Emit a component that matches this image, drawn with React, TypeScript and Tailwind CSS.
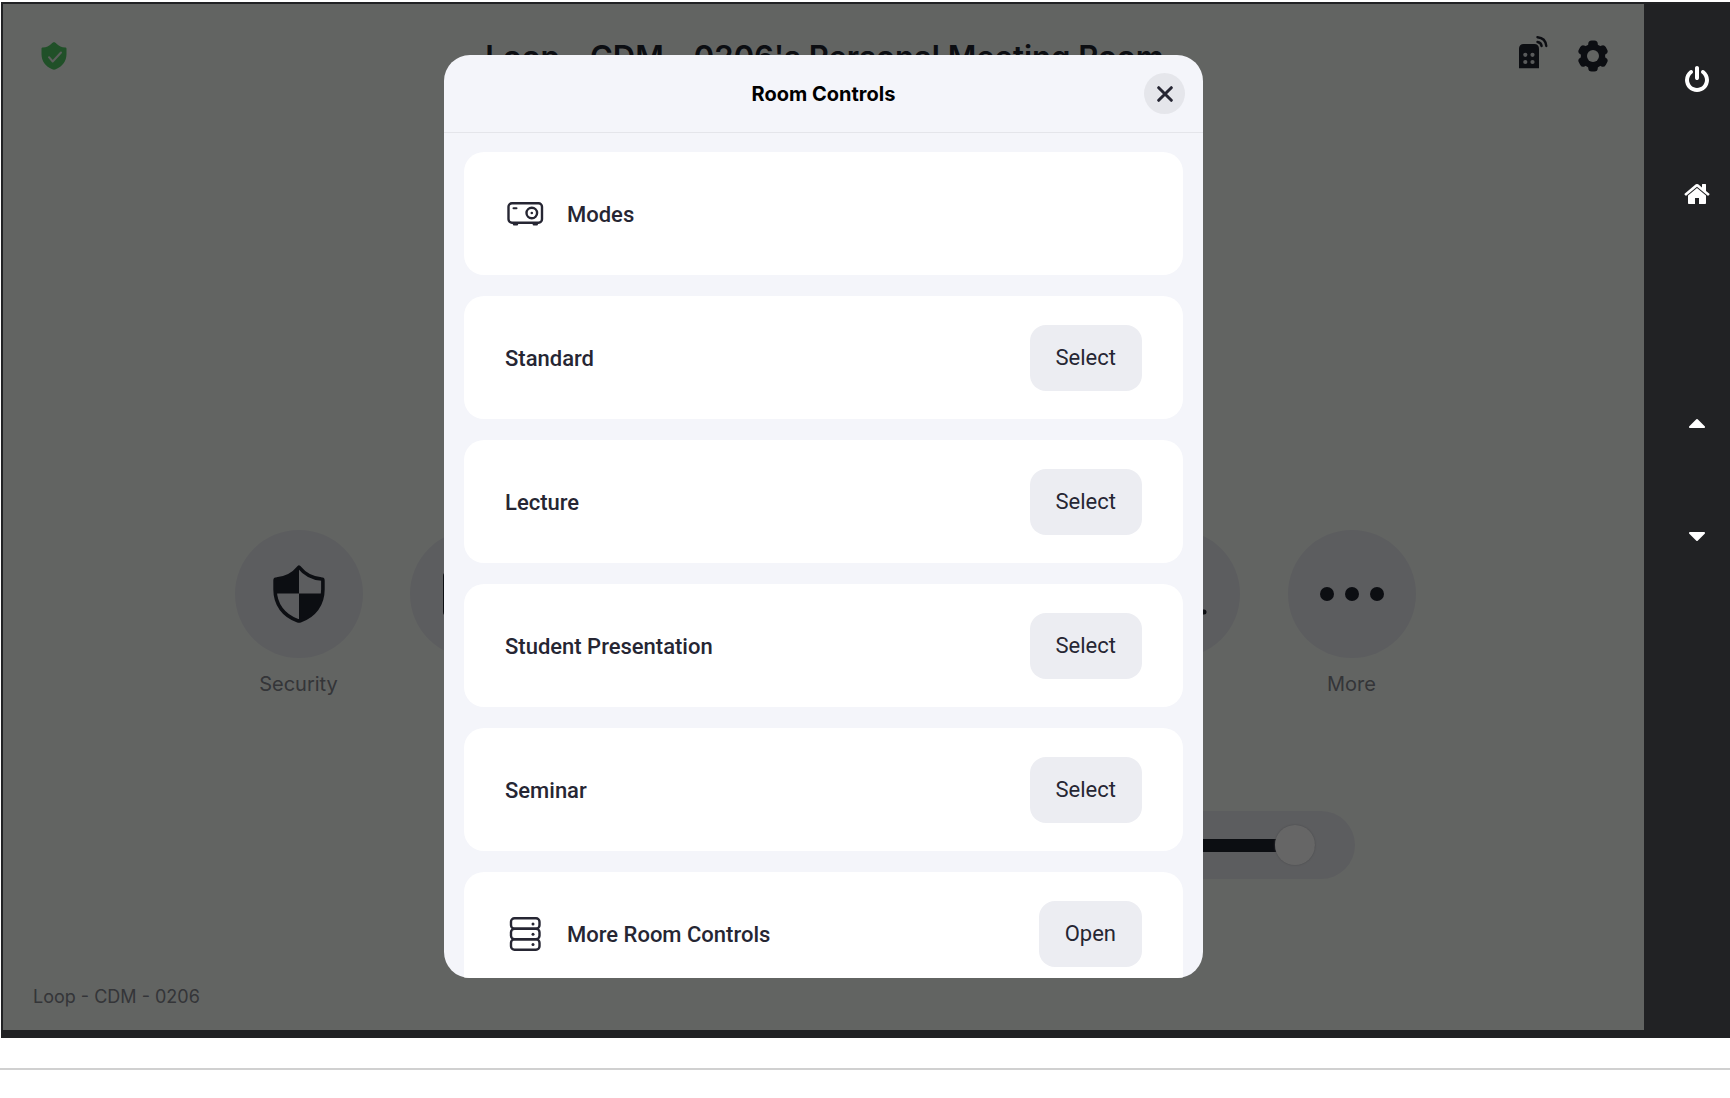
import { useState } from 'react';
import type { ReactNode } from 'react';

interface IconProps {
  className?: string;
}

interface Tool {
  id: string;
  label?: string;
  icon?: ReactNode;
}

interface Row {
  title: string;
  action?: string;
  icon?: ReactNode;
}

function IconVerified({ className }: IconProps) {
  return (
    <svg className={className} viewBox="0 0 26 28" fill="none" aria-hidden="true">
      <path d="M13 0.3c1 0 1.7.6 2.5 1.4 2.4 2.4 5.200 3.600 8.700 3.700.8 0 1.300.5 1.300 1.300v5.300c0 7-4 12.400-10.700 15.300-1.200.6-2.400.6-3.600 0C4.500 24.400.5 19 .5 12V6.700c0-.8.5-1.300 1.300-1.300 3.500-.1 6.300-1.300 8.700-3.700.8-.8 1.500-1.400 2.500-1.400z" fill="#51c765" />
      <path d="M8 15.200l3.700 4.300L20 10.500" stroke="#e3ebe5" strokeWidth="2" strokeLinecap="round" strokeLinejoin="round" />
    </svg>
  );
}

function IconRoomSignal({ className }: IconProps) {
  return (
    <svg className={className} viewBox="0 0 29 40" fill="none" aria-hidden="true">
      <path d="M0 32.300V12.500C0 9.800 1.800 8 4.500 8h11c2.700 0 4.500 1.800 4.500 4.500v19.800z" fill="#20232f" />
      <g fill="#dfe3e4">
        <circle cx="6.300" cy="18.800" r="2.100" />
        <circle cx="13.500" cy="18.800" r="2.100" />
        <circle cx="6.300" cy="26" r="2.100" />
        <circle cx="13.500" cy="26" r="2.100" />
      </g>
      <path d="M18.500 1.200c5 .4 8.300 3.600 8.800 8.800M18.500 6c2.500.3 3.800 1.600 4.100 4" stroke="#20232f" strokeWidth="2.400" strokeLinecap="round" />
    </svg>
  );
}

function IconGear({ className }: IconProps) {
  return (
    <svg className={className} viewBox="0 0 30 32" aria-hidden="true">
      <g fill="#20232f">
        <circle cx="15" cy="16" r="12.200" />
        <rect x="10.200" y="0.500" width="9.600" height="31" rx="3.500" />
        <rect x="10.200" y="0.500" width="9.600" height="31" rx="3.500" transform="rotate(60 15 16)" />
        <rect x="10.200" y="0.500" width="9.600" height="31" rx="3.500" transform="rotate(120 15 16)" />
      </g>
      <circle cx="15" cy="16" r="6" fill="#f5faf5" />
    </svg>
  );
}

function IconSecurity() {
  return (
    <svg className="h-[58px] w-[52px]" viewBox="0 0 52 58" fill="none" aria-hidden="true">
      <path d="M26 2v26.500H2.500C2 24 2 19 2 14.500 12 14 20 9.500 26 2z" fill="#20232f" />
      <path d="M26 28.500h23.500C48 42 39 51 26 56z" fill="#20232f" />
      <path d="M26 2.200c5.500 6.800 13 11.300 22.500 11.800.9 0 1.400.5 1.400 1.400v9.100c0 15-8.500 26.300-22.600 31.200-.9.300-1.700.3-2.600 0C10.600 50.800 2.100 39.500 2.100 24.500v-9.100c0-.9.500-1.400 1.400-1.400C13 13.500 20.500 9 26 2.200z" stroke="#20232f" strokeWidth="3.600" strokeLinejoin="round" />
    </svg>
  );
}

function IconShare() {
  return (
    <svg className="h-12 w-16" viewBox="0 0 64 48" fill="none" stroke="#20232f" strokeWidth="4" strokeLinecap="round" strokeLinejoin="round" aria-hidden="true">
      <rect x="3" y="3" width="58" height="42" rx="3" />
      <path d="M32 35V15M24 22l8-8 8 8" />
    </svg>
  );
}

function IconParticipants() {
  return (
    <svg className="h-12 w-16" viewBox="0 0 64 48" fill="none" stroke="#20232f" strokeWidth="5" strokeLinecap="round" aria-hidden="true">
      <circle cx="32" cy="12" r="9" />
      <path d="M4 42h56" />
    </svg>
  );
}

function IconMore() {
  return (
    <svg className="h-4 w-[66px]" viewBox="0 0 66 16" fill="#20232f" aria-hidden="true">
      <circle cx="8" cy="8" r="7" />
      <circle cx="33" cy="8" r="7" />
      <circle cx="58" cy="8" r="7" />
    </svg>
  );
}

function IconProjector() {
  return (
    <svg className="h-6 w-[42px]" viewBox="0 0 42 24" fill="none" stroke="#262633" strokeWidth="2.400" strokeLinecap="round" aria-hidden="true">
      <rect x="3.500" y="1.200" width="33.500" height="19.600" rx="3.500" />
      <path d="M8.500 6.300h3" strokeWidth="2" />
      <circle cx="26.800" cy="11" r="5.300" />
      <circle cx="26.800" cy="11" r="1.300" fill="#262633" stroke="none" />
      <path d="M9 22.200h3M28.800 22.200h3" />
    </svg>
  );
}

function IconRack() {
  return (
    <svg className="h-[34px] w-[42px]" viewBox="0 0 42 34" fill="none" stroke="#262633" strokeWidth="2.400" aria-hidden="true">
      <rect x="6" y="1.200" width="28.500" height="10.500" rx="3.500" />
      <rect x="6" y="11.700" width="28.500" height="10.500" rx="3.500" />
      <rect x="6" y="22.200" width="28.500" height="10.500" rx="3.500" />
      <g fill="#262633" stroke="none">
        <circle cx="28" cy="7" r="1.500" />
        <circle cx="28" cy="17.200" r="1.500" />
        <circle cx="28" cy="27.500" r="1.500" />
      </g>
    </svg>
  );
}

const railIcons = {
  power:
    'M1664 896q0 156-61 298t-164 245-245 164-298 61-298-61-245-164-164-245-61-298q0-182 80.5-343t226.5-270q43-32 95.5-25t83.5 50q32 42 24.5 94.5t-49.5 84.5q-98 74-151.5 181t-53.5 228q0 104 40.5 198.5t109.5 163.5 163.5 109.5 198.5 40.5 198.5-40.5 163.5-109.5 109.5-163.5 40.5-198.5q0-121-53.5-228t-151.5-181q-42-32-49.5-84.5t24.5-94.5q31-43 84-50t95 25q146 109 226.5 270t80.5 343zm-640-768v640q0 52-38 90t-90 38-90-38-38-90v-640q0-52 38-90t90-38 90 38 38 90z',
  home:
    'M1472 992v480q0 26-19 45t-45 19h-384v-384h-256v384h-384q-26 0-45-19t-19-45v-480q0-1 .5-3t.5-3l575-474 575 474q1 2 1 6zm223-69l-62 74q-8 9-21 11h-3q-13 0-21-7l-692-577-692 577q-12 8-24 7-13-2-21-11l-62-74q-8-10-7-23.500t11-21.500l719-599q32-26 76-26t76 26l244 204v-195q0-14 9-23t23-9h192q14 0 23 9t9 23v408l219 182q10 8 11 21.500t-7 23.500z',
  up: 'M1408 1216q0 26-19 45t-45 19h-896q-26 0-45-19t-19-45 19-45l448-448q19-19 45-19t45 19l448 448q19 19 19 45z',
  down: 'M1408 704q0 26-19 45l-448 448q-19 19-45 19t-45-19l-448-448q-19-19-19-45t19-45 45-19h896q26 0 45 19t19 45z',
};

function RailButton({ label, path }: { label: string; path: string }) {
  return (
    <button type="button" aria-label={label} className="cursor-pointer">
      <svg className="h-7 w-7" viewBox="0 0 1792 1792" fill="#ffffff" aria-hidden="true">
        <path d={path} />
      </svg>
    </button>
  );
}

const tools: Tool[] = [
  { id: 'security', label: 'Security', icon: <IconSecurity /> },
  { id: 'share', icon: <IconShare /> },
  { id: 'record' },
  { id: 'camera' },
  { id: 'captions' },
  { id: 'participants', icon: <IconParticipants /> },
  { id: 'more', label: 'More', icon: <IconMore /> },
];

const rows: Row[] = [
  { title: 'Modes', icon: <IconProjector /> },
  { title: 'Standard', action: 'Select' },
  { title: 'Lecture', action: 'Select' },
  { title: 'Student Presentation', action: 'Select' },
  { title: 'Seminar', action: 'Select' },
  { title: 'More Room Controls', action: 'Open', icon: <IconRack /> },
];

function MeetingScreen() {
  const [volume, setVolume] = useState(100);

  return (
    <div className="flex flex-1 flex-col bg-[#f5faf5] font-['Inter',sans-serif]">
      <header className="grid h-[104px] grid-cols-[1fr_auto_1fr] items-center pr-9 pl-[38px]">
        <IconVerified className="h-7 w-[26px]" />
        <h1 className="pt-0.5 text-[31px] leading-10 font-semibold text-[#20232f]">Loop - CDM - 0206's Personal Meeting Room</h1>
        <div className="flex items-center gap-[30px] justify-self-end">
          <IconRoomSignal className="h-10 w-[29px]" />
          <button type="button" aria-label="Settings">
            <IconGear className="h-8 w-[30px]" />
          </button>
        </div>
      </header>

      <main className="mx-auto flex w-full max-w-[1184px] flex-1 flex-col justify-end gap-[113px] pb-[106px] pl-[3px]">
        <div className="flex items-start justify-between">
          {tools.map((tool) => (
            <button key={tool.id} type="button" aria-label={tool.id} className="flex w-32 flex-col items-center gap-3">
              <span className="flex h-32 w-32 items-center justify-center rounded-full bg-[#e6e8ed]">{tool.icon}</span>
              <span className="h-7 text-xl leading-7 text-[#82848c]">{tool.label}</span>
            </button>
          ))}
        </div>

        <div className="mr-[61px] flex h-[68px] w-[500px] items-center self-end rounded-full bg-[#e6e8ed] px-10">
          <input
            type="range"
            aria-label="Volume"
            value={volume}
            onChange={(e) => setVolume(Number(e.target.value))}
            className="h-[13px] w-full appearance-none rounded-full bg-[#20232f] [&::-webkit-slider-thumb]:h-10 [&::-webkit-slider-thumb]:w-10 [&::-webkit-slider-thumb]:appearance-none [&::-webkit-slider-thumb]:rounded-full [&::-webkit-slider-thumb]:bg-white [&::-webkit-slider-thumb]:shadow-[0_0_2px_#b0b2b8]"
          />
        </div>
      </main>

      <p className="pb-[21px] pl-[30px] text-lg leading-6 text-[#82848c]">Loop - CDM - 0206</p>
    </div>
  );
}

function RoomControls() {
  return (
    <div role="dialog" aria-labelledby="room-controls-title" className="flex max-h-full w-[759px] flex-col overflow-hidden rounded-[26px] bg-[#f4f5fa]">
      <div className="grid h-[78px] shrink-0 grid-cols-[41px_1fr_41px] items-center border-b border-[#e4e5ea] px-[18px]">
        <h2 id="room-controls-title" className="col-start-2 text-center font-['Inter',sans-serif] text-xl leading-7 font-bold text-black">
          Room Controls
        </h2>
        <button type="button" aria-label="Close" className="flex h-[41px] w-[41px] items-center justify-center rounded-full bg-[#e5e6eb]">
          <svg className="h-4 w-4" viewBox="0 0 16 16" stroke="#262633" strokeWidth="3" strokeLinecap="round" aria-hidden="true">
            <path d="M1.700 1.700l12.600 12.600M14.300 1.700L1.700 14.300" />
          </svg>
        </button>
      </div>

      <ul className="flex flex-col gap-[21px] overflow-y-auto px-5 pt-[19px] pb-5 [scrollbar-width:none]">
        {rows.map((row) => (
          <li key={row.title} className="flex h-[123px] shrink-0 items-center gap-5 rounded-[20px] bg-white px-[41px] text-[22px] leading-7 text-[#262633]">
            {row.icon}
            <span className="flex-1 pt-0.5 font-medium">{row.title}</span>
            {row.action && (
              <button type="button" aria-label={`${row.action} ${row.title}`} className="h-[66px] rounded-2xl bg-[#ecedf2] px-[26px] hover:bg-[#e2e3e9]">
                {row.action}
              </button>
            )}
          </li>
        ))}
      </ul>
    </div>
  );
}

export default function App() {
  return (
    <div className="flex h-screen min-h-[700px] flex-col bg-white pt-0.5 font-['Roboto',sans-serif]">
      <div className="ml-px flex min-h-0 flex-1 border-t-2 border-b-8 border-l-2 border-[#212224] bg-[#212224]">
        <div className="relative flex min-w-0 flex-1">
          <MeetingScreen />
          <div className="absolute inset-0 flex items-start justify-center bg-black/60 pt-[51px] pb-[52px]">
            <RoomControls />
          </div>
        </div>

        <nav className="flex w-[86px] shrink-0 flex-col items-center gap-[200px] pt-[62px] pl-5">
          <div className="flex flex-col gap-[86px]">
            <RailButton label="Power" path={railIcons.power} />
            <RailButton label="Home" path={railIcons.home} />
          </div>
          <div className="flex flex-col gap-[86px]">
            <RailButton label="Volume up" path={railIcons.up} />
            <RailButton label="Volume down" path={railIcons.down} />
          </div>
        </nav>
      </div>

      <footer className="h-[60px] shrink-0 pt-[30px]">
        <hr className="border-t-2 border-[#d0d0d0]" />
      </footer>
    </div>
  );
}
